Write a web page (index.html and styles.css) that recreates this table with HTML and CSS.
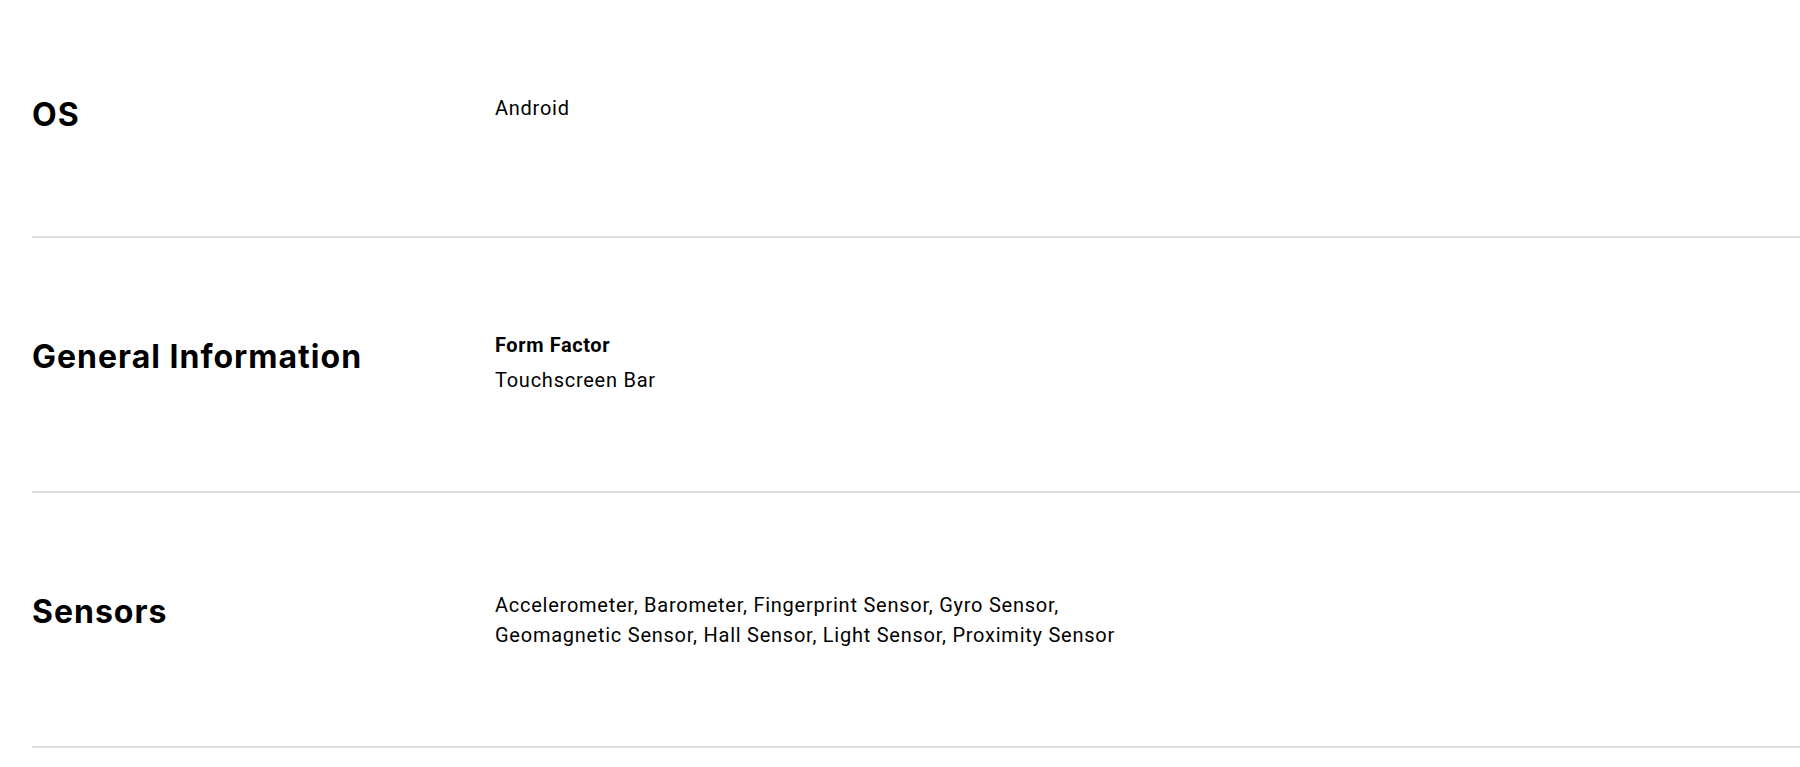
FILE: index.html
```html
<!DOCTYPE html>
<html lang="en">
<head>
<meta charset="utf-8">
<title>Specs</title>
<link rel="stylesheet" href="styles.css">
</head>
<body>
<div class="specs">
  <section class="spec-row">
    <h2 class="spec-title">OS</h2>
    <div class="spec-values">
      <p class="spec-text">Android</p>
    </div>
  </section>
  <section class="spec-row">
    <h2 class="spec-title">General Information</h2>
    <div class="spec-values">
      <p class="spec-label">Form Factor</p>
      <p class="spec-text">Touchscreen Bar</p>
    </div>
  </section>
  <section class="spec-row">
    <h2 class="spec-title">Sensors</h2>
    <div class="spec-values">
      <p class="spec-text">Accelerometer, Barometer, Fingerprint Sensor, Gyro Sensor,<br>Geomagnetic Sensor, Hall Sensor, Light Sensor, Proximity Sensor</p>
    </div>
  </section>
</div>
</body>
</html>
```

FILE: styles.css
```css
html, body {
  margin: 0;
  padding: 0;
  background: #fff;
  color: #000;
}

body {
  font-family: Roboto, "Liberation Sans", sans-serif;
  overflow: hidden;
}

.specs {
  padding-left: 32px;
  margin-top: -4px;
}

.spec-row {
  box-sizing: border-box;
  display: grid;
  grid-template-columns: 463px 1fr;
  align-items: start;
  padding: 94px 0 96px;
  border-bottom: 2px solid #dcdcdc;
}

.spec-title {
  margin: 0;
  font-family: Inter, "Noto Sans", sans-serif;
  font-weight: 700;
  font-size: 32px;
  line-height: 50px;
  letter-spacing: 1px;
}

.spec-label {
  margin: 0 0 4px;
  font-weight: 700;
  font-size: 20px;
  line-height: 26px;
  letter-spacing: 0.6px;
}

.spec-text {
  margin: 0;
  padding-top: 3px;
  font-size: 20px;
  line-height: 30px;
  font-weight: 400;
  letter-spacing: 0.75px;
}
```
